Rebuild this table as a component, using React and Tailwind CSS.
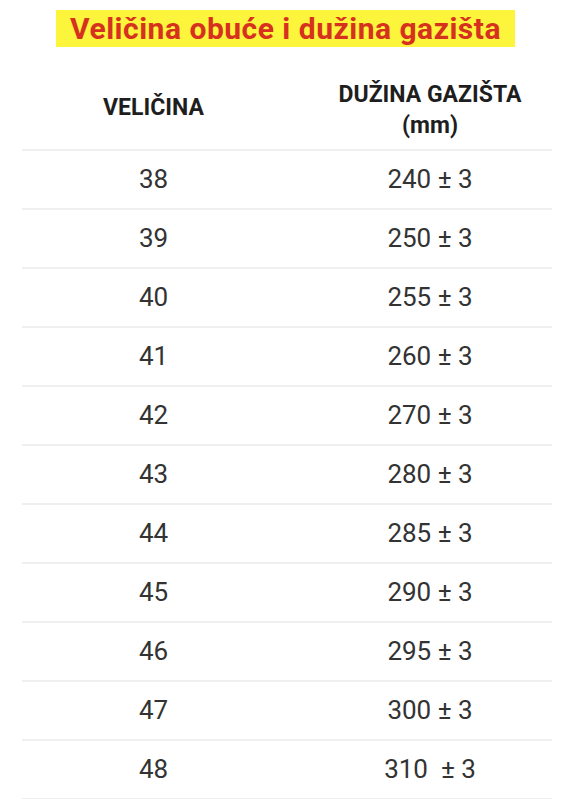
import React from 'react';

const rows = [
    ['38', '240 ± 3'],
    ['39', '250 ± 3'],
    ['40', '255 ± 3'],
    ['41', '260 ± 3'],
    ['42', '270 ± 3'],
    ['43', '280 ± 3'],
    ['44', '285 ± 3'],
    ['45', '290 ± 3'],
    ['46', '295 ± 3'],
    ['47', '300 ± 3'],
    ['48', '310  ± 3'],
];

function App() {
    return (
        <div className="w-[574px] h-[799px] overflow-hidden bg-white font-['Roboto',sans-serif]">
            {/* title banner */}
            <div className="pt-[10px] pl-[56px]">
                <div className="w-[459px] h-[37px] bg-[#fdf43c] flex items-center justify-center">
                    <h1 className="text-[30px] font-bold text-[#d6311f] leading-none tracking-[0.5px]">
                        Veličina obuće i dužina gazišta
                    </h1>
                </div>
            </div>

            <div className="mx-[22px]">
                {/* header */}
                <div className="grid grid-cols-[263px_1fr] h-[104px] border-b-2 border-[#efefef] text-[#1e1e1e] font-bold text-[23px] leading-[31px]">
                    <div className="text-center pt-[45px]">VELIČINA</div>
                    <div className="text-center pl-[23px] pt-[32px]">
                        DUŽINA GAZIŠTA
                        <br />
                        (mm)
                    </div>
                </div>

                {rows.map(([size, length]) => (
                    <div
                        key={size}
                        className="grid grid-cols-[263px_1fr] h-[59px] border-b-2 border-[#efefef] items-center text-[#333] text-[26px]"
                    >
                        <div className="text-center">{size}</div>
                        <div className="text-center pl-[23px] whitespace-pre">{length}</div>
                    </div>
                ))}
            </div>
        </div>
    );
}

export default App;
